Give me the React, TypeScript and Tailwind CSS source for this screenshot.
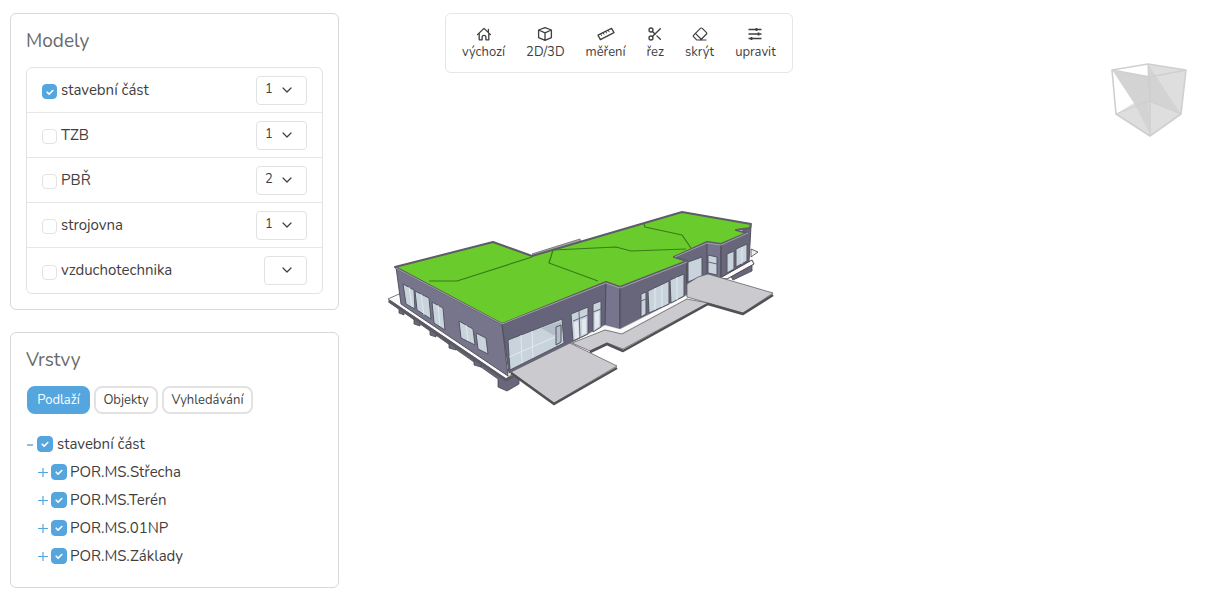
import React from 'react';
import { ChevronDown, Eraser, Scissors } from 'lucide-react';

const models = [
  { id: 'stavebni', name: 'stavební část', version: '1', checked: true },
  { id: 'tzb', name: 'TZB', version: '1', checked: false },
  { id: 'pbr', name: 'PBŘ', version: '2', checked: false },
  { id: 'strojovna', name: 'strojovna', version: '1', checked: false },
  { id: 'vzt', name: 'vzduchotechnika', version: '', checked: false },
];

const floors = ['POR.MS.Střecha', 'POR.MS.Terén', 'POR.MS.01NP', 'POR.MS.Základy'];

const HomeIcon: React.FC = () => (
  <svg viewBox="0 0 16 16" className="size-4" fill="none" stroke="currentColor" strokeLinecap="round" strokeLinejoin="round">
    <path d="M1.5 8.6 8 2.4l6.5 6.2M3.2 7.4v6.4h2.9v-2.6a1.9 1.9 0 0 1 3.8 0v2.6h2.9V7.4M12.4 6.2V3.4" strokeWidth="1.3" />
  </svg>
);

const CubeIcon: React.FC = () => (
  <svg viewBox="0 0 16 16" className="size-4" fill="none" stroke="currentColor" strokeLinejoin="round">
    <path d="M8 1.6 14.4 4v7.6L8 14.4 1.6 11.6V4ZM1.6 4 8 6.8 14.4 4M8 6.8v7.6" strokeWidth="1.3" />
  </svg>
);

const RulerIcon: React.FC = () => (
  <svg viewBox="0 0 18 16" className="h-4 w-[18px]" fill="none" stroke="currentColor" strokeLinejoin="round">
    <path d="M1 9.2 14.6 2.4 17 6.6 3.4 13.6Z" strokeWidth="1.3" />
    <path d="m3.8 8.1.9 1.7M6.3 6.9l.9 1.7M8.8 5.6l.9 1.7M11.3 4.4l.9 1.7" strokeWidth="1" />
  </svg>
);

const SlidersIcon: React.FC = () => (
  <svg viewBox="0 0 16 16" className="size-4" fill="none" stroke="currentColor">
    <path d="M1.5 3.5h13M1.5 8h13M1.5 12.5h13" strokeWidth="1.4" />
    <path d="M9.5 2v3M11.5 6.5v3M4.5 11v3" strokeWidth="1.8" />
  </svg>
);

const tools = [
  { label: 'výchozí', icon: <HomeIcon /> },
  { label: '2D/3D', icon: <CubeIcon /> },
  { label: 'měření', icon: <RulerIcon /> },
  { label: 'řez', icon: <Scissors size={16} strokeWidth={2} /> },
  { label: 'skrýt', icon: <Eraser size={16} strokeWidth={1.8} /> },
  { label: 'upravit', icon: <SlidersIcon /> },
];

const Checkbox: React.FC<{ id: string; checked: boolean; small?: boolean }> = ({ id, checked, small }) => (
  <span className="grid shrink-0 place-items-center">
    <input
      id={id}
      type="checkbox"
      defaultChecked={checked}
      className={`peer col-start-1 row-start-1 appearance-none rounded border border-[#e2e2e2] bg-white checked:border-[#55a5df] checked:bg-[#55a5df] ${small ? 'size-[15px]' : 'size-4'}`}
    />
    <svg viewBox="0 0 10 10" className="pointer-events-none invisible col-start-1 row-start-1 size-[10px] peer-checked:visible" fill="none" stroke="white" strokeWidth="1.6" strokeLinecap="round" strokeLinejoin="round">
      <path d="m2.2 5.2 1.9 1.9L7.8 3.5" />
    </svg>
  </span>
);

const ModelsPanel: React.FC = () => (
  <section className="rounded-md border border-[#d8d8d8] px-[15px] pt-[13px] pb-[15px]">
    <h2 className="text-[19px] leading-7 text-[#6a6a6a]">Modely</h2>
    <ul className="mt-3 divide-y divide-[#e6e6e6] rounded-md border border-[#e2e2e2]">
      {models.map((model) => (
        <li key={model.id} className="flex h-[45px] items-center justify-between px-[15px]">
          <div className="flex items-center gap-1">
            <span className="pt-[3px]">
              <Checkbox id={model.id} checked={model.checked} small />
            </span>
            <label htmlFor={model.id}>{model.name}</label>
          </div>
          <div className="relative">
            <select
              aria-label={`Verze ${model.name}`}
              defaultValue={model.version}
              className={`block h-[29px] appearance-none rounded border border-[#e2e2e2] bg-white pl-2 text-[13px] ${model.version ? 'w-[51px]' : 'w-[43px]'}`}
            >
              <option value={model.version}>{model.version}</option>
            </select>
            <ChevronDown size={16} strokeWidth={1.8} className="pointer-events-none absolute top-1.5 right-3" />
          </div>
        </li>
      ))}
    </ul>
  </section>
);

const LayersPanel: React.FC = () => (
  <section className="rounded-md border border-[#d8d8d8] px-[15px] pt-[13px] pb-[15px]">
    <h2 className="text-[19px] leading-7 text-[#6a6a6a]">Vrstvy</h2>
    <div className="mt-3 ml-px flex gap-1 text-[13px]">
      <button className="h-7 w-[63px] rounded-lg border-2 border-[#55a5df] bg-[#55a5df] leading-6 text-white">Podlaží</button>
      <button className="h-7 w-16 rounded-lg border-2 border-[#e2e2e2] leading-6">Objekty</button>
      <button className="h-7 w-[91px] rounded-lg border-2 border-[#e2e2e2] leading-6">Vyhledávání</button>
    </div>

    <div className="mt-4 pb-0.5">
      <div className="flex h-7 items-center gap-1">
        <button aria-label="Sbalit" className="w-[7px] text-[#55a5df]">
          <svg viewBox="0 0 7 7" className="size-[7px]" stroke="currentColor"><path d="M1 4h6" strokeWidth="1.4" /></svg>
        </button>
        <Checkbox id="root-layer" checked />
        <label htmlFor="root-layer">stavební část</label>
      </div>
      <ul className="pl-3">
        {floors.map((floor) => (
          <li key={floor} className="flex h-7 items-center gap-[3px]">
            <button aria-label={`Rozbalit ${floor}`} className="text-[#55a5df]">
              <svg viewBox="0 0 10 10" className="size-[10px]" stroke="currentColor"><path d="M0 5.5h10M5 1v9" strokeWidth="1.2" /></svg>
            </button>
            <Checkbox id={floor} checked />
            <label htmlFor={floor}>{floor}</label>
          </li>
        ))}
      </ul>
    </div>
  </section>
);

const ViewCube: React.FC = () => (
  <svg viewBox="1112 61 77 76" className="h-[76px] w-[77px]" strokeLinejoin="round">
    <path d="M1149 64 1187 70 1182 114 1151 136 1117 114 1135 103 1114 71 1149 76Z" fill="#dedede" />
    <path d="M1114 71 1150 77 1149 95 1135 103Z" fill="#d3d3d3" />
    <path d="M1135 103 1149 95 1151 134Z" fill="#d3d3d3" />
    <path d="M1149 64 1181 113 1151 101Z" fill="#d3d3d3" />
    <path d="M1113 70 1149 64 1187 70 1182 114 1151 136 1117 114ZM1113 70 1151 77 1187 70M1151 77V136" fill="none" stroke="#cfcfcf" strokeWidth="1.6" />
    <path d="M1117 114 1150 101 1182 114M1149 64 1150 101" fill="none" stroke="#cecece" strokeWidth="1" />
  </svg>
);

const BuildingModel: React.FC = () => (
  <svg viewBox="386 208 390 200" className="h-[200px] w-[390px]" strokeLinejoin="round">
    {/* foundations */}
    <g fill="#69677b" stroke="#4a4954" strokeWidth=".8">
      <path d="M389 300 506 380 519 374V384L507 391 498 387V379L389 302Z" />
      <path d="M399 307v6l5 2v-5zM414 318v6l6 2v-5zM430 329v6l6 2v-5zM449 341v7l7 2v-6zM474 358v7l7 2v-6z" />
      <path d="M730 275 752 263V271L733 280Z" />
      <path d="M751 249 758 252 751 257Z" fill="#eee" stroke="#444" />
    </g>
    <path d="M388 299 399 294 513 373 506 379Z" fill="#fafafa" stroke="#7c7a80" strokeWidth="1" />
    <path d="M389 301 506 380 513 376" fill="none" stroke="#5b5a63" strokeWidth="3" />

    {/* walls */}
    <g stroke="#4a4852" strokeWidth=".9">
      <path d="M396 267 502 324 508 376 401 304Z" fill="#77758b" />
      <path d="M502 324 606 282 606 326 509 373Z" fill="#66647a" />
      <path d="M606 282 620 287V329L605 325Z" fill="#77748d" />
      <path d="M620 287 687 261V297L620 329Z" fill="#68667a" />
      <path d="M672 257 707 242 721 244V278L687 285V261Z" fill="#69677b" />
      <path d="M707 242 721 244V278L707 274Z" fill="#77748d" />
      <path d="M721 244 751 226 749 262 721 278Z" fill="#68667a" />
    </g>

    {/* base strips */}
    <path d="M571 343 605 325 620 329 687 295V299L621 334 605 330 574 346Z" fill="#fafafa" stroke="#aaa" strokeWidth=".5" />
    <path d="M720 278 752 260 754 264 727 279Z" fill="#fafafa" stroke="#46444b" strokeWidth="1" />

    {/* roof */}
    <path d="M532 254 580 239 581 243 536 258Z" fill="#aaa" stroke="#7d7b83" strokeWidth="1" />
    <path d="M395 267 493 242 532 256 682 212 751 224 750 228 736 230 747 233 721 244 707 242 674 257 687 261 620 287 606 282 502 324Z" fill="#69cc2c" stroke="#5e5c66" strokeWidth="2" />
    <path d="M396 268 502 324 606 283 620 288 687 262M675 257 707 243 721 245 748 233" fill="none" stroke="#b5b3bd" strokeWidth=".8" />
    <path d="M429 281 457 281 532 257M553 250 549 263 598 281M553 250 616 247 631 251 686 249M644 224 645 227 682 235 691 248" fill="none" stroke="#397b17" strokeWidth="1.2" />

    {/* windows */}
    <g fill="#c8d3dc" stroke="#535562" strokeWidth="1">
      <path d="M403 284 414 290 415 309 406 304ZM415 291 429 298 431 319 417 310ZM432 302 443 308 445 330 434 323Z" />
      <path d="M459 321 473 329 475 345 461 338ZM476 333 486 338 488 354 478 349Z" />
      <path d="M508 340 562 319 564 343 510 370Z" />
      <path d="M571 314 588 307 588 334 573 341ZM593 304 601 301V327L593 332Z" />
      <path d="M641 294 646 292V314L641 317ZM648 291 669 281V304L649 313ZM670 280 684 274V296L671 303Z" />
      <path d="M688 262 702 257V276L688 282ZM708 255 717 257V275L708 273Z" />
      <path d="M727 254 734 251V269L727 273ZM736 249 747 244V261L736 267Z" />
    </g>
    <path d="M409 287 412 307M421 294 424 315M438 305 440 326M466 325 468 341M521 335 522 363M532 331 533 358M509 357 555 337M655 288V310M662 285V307M677 277V300M742 247V264" fill="none" stroke="#e9eef2" strokeWidth=".8" />
    <path d="M541 328 562 321V332L553 335Z" fill="#b3bec9" />
    <path d="M579 311 580 338M573 321 588 315M593 312 601 309M641 301 646 299M708 262 717 264" fill="none" stroke="#686778" strokeWidth="1" />
    <path d="M574 323 578 321 579 337 575 339ZM582 320 586 318V333L582 335ZM595 313 599 311V326L595 329Z" fill="#e3e8f1" />
    <path d="M556 327 561 325V342L556 345Z" fill="#b3bec7" stroke="#535562" strokeWidth="1" />

    {/* terraces */}
    <g fill="#cbcacf" stroke="#67656b" strokeWidth=".8">
      <path d="M572 343 605 330 622 334 687 299 708 303 623 349 607 343 590 351Z" />
      <path d="M687 284 698 277 708 274 773 293 743 313 687 297Z" />
      <path d="M511 372 570 343 617 366 554 403Z" />
    </g>
    <path d="M511 373 554 404 617 368M590 352 607 344 623 351 708 304 743 314 773 295" fill="none" stroke="#515054" strokeWidth="2.5" />
  </svg>
);

const App: React.FC = () => {
  return (
    <main className="flex items-start bg-white pt-[13px] pl-[10px] font-['Nunito','Lato',sans-serif] text-[15px] text-[#3f3f3f]">
      <aside className="flex w-[329px] shrink-0 flex-col gap-[22px]">
        <ModelsPanel />
        <LayersPanel />
      </aside>

      <div className="min-w-0 flex-1">
        <div className="flex items-start justify-between pr-9 pl-[106px]">
          <nav className="flex h-[60px] gap-[21px] rounded-md border border-[#e6e6e6] px-4 pt-3 text-[13px]">
            {tools.map((tool) => (
              <button key={tool.label} className="flex flex-col items-center">
                <span className="flex h-4 items-center">{tool.icon}</span>
                <span className="leading-5">{tool.label}</span>
              </button>
            ))}
          </nav>
          <div className="pt-12">
            <ViewCube />
          </div>
        </div>
        <div className="pt-[71px] pl-[47px]">
          <BuildingModel />
        </div>
      </div>
    </main>
  );
};

export default App;
